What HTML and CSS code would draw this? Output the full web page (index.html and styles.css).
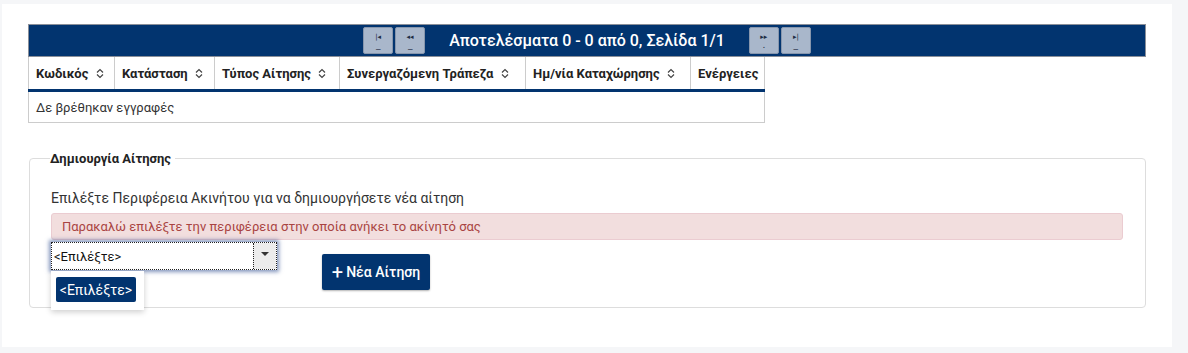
FILE: index.html
```html
<!DOCTYPE html>
<html lang="el">
<head>
    <meta charset="UTF-8">
    <title>Αιτήσεις</title>
    <link rel="stylesheet" href="styles.css">
</head>
<body>
    <div class="page">
        <div class="pager">
            <button class="pg-btn"><span class="pg-ico">|◂</span><span class="pg-bar">_</span></button>
            <button class="pg-btn"><span class="pg-ico">◂◂</span><span class="pg-bar">_</span></button>
            <span class="pager-text">Αποτελέσματα 0 - 0 από 0, Σελίδα 1/1</span>
            <button class="pg-btn"><span class="pg-ico">▸▸</span><span class="pg-bar">.</span></button>
            <button class="pg-btn"><span class="pg-ico">▸|</span><span class="pg-bar">_</span></button>
        </div>
        <table class="grid">
            <colgroup>
                <col style="width: 86px">
                <col style="width: 100px">
                <col style="width: 125px">
                <col style="width: 186px">
                <col style="width: 165px">
                <col style="width: 74px">
            </colgroup>
            <thead>
                <tr>
                    <th>Κωδικός <svg class="sort" viewBox="0 0 8 11"><path d="M1 4.5 L4 1.5 L7 4.5 M1 6.5 L4 9.5 L7 6.5"/></svg></th>
                    <th>Κατάσταση <svg class="sort" viewBox="0 0 8 11"><path d="M1 4.5 L4 1.5 L7 4.5 M1 6.5 L4 9.5 L7 6.5"/></svg></th>
                    <th>Τύπος Αίτησης <svg class="sort" viewBox="0 0 8 11"><path d="M1 4.5 L4 1.5 L7 4.5 M1 6.5 L4 9.5 L7 6.5"/></svg></th>
                    <th>Συνεργαζόμενη Τράπεζα <svg class="sort" viewBox="0 0 8 11"><path d="M1 4.5 L4 1.5 L7 4.5 M1 6.5 L4 9.5 L7 6.5"/></svg></th>
                    <th>Ημ/νία Καταχώρησης <svg class="sort" viewBox="0 0 8 11"><path d="M1 4.5 L4 1.5 L7 4.5 M1 6.5 L4 9.5 L7 6.5"/></svg></th>
                    <th>Ενέργειες</th>
                </tr>
            </thead>
            <tbody>
                <tr><td colspan="6">Δε βρέθηκαν εγγραφές</td></tr>
            </tbody>
        </table>

        <fieldset class="create">
            <legend>Δημιουργία Αίτησης</legend>
            <p class="hint">Επιλέξτε Περιφέρεια Ακινήτου για να δημιουργήσετε νέα αίτηση</p>
            <div class="alert">Παρακαλώ επιλέξτε την περιφέρεια στην οποία ανήκει το ακίνητό σας</div>
            <div class="form-row">
                <div class="combo">
                    <div class="combo-box">
                        <span class="combo-value">&lt;Επιλέξτε&gt;</span>
                        <span class="combo-arrow"></span>
                    </div>
                    <div class="combo-list">
                        <div class="combo-item">&lt;Επιλέξτε&gt;</div>
                    </div>
                </div>
                <button class="btn-new"><span class="plus">+</span> Νέα Αίτηση</button>
            </div>
        </fieldset>
    </div>
</body>
</html>
```

FILE: styles.css
```css
body {
    margin: 0;
    background: #f5f6f8;
    font-family: Roboto, "Open Sans", sans-serif;
    color: #333;
}

.page {
    background: #fff;
    margin: 4px 16px 6px 2px;
    height: 343px;
    padding: 20px 26px 0 26px;
    box-sizing: border-box;
}

/* pager bar */
.pager {
    background: #02346f;
    border: 1px solid #8a8f99;
    height: 33px;
    box-sizing: border-box;
    display: flex;
    justify-content: center;
    align-items: center;
    gap: 2px;
}

.pg-btn {
    width: 30px;
    height: 27px;
    background: #a9b7cb;
    border: 1px solid #8796ad;
    border-radius: 2px;
    padding: 0;
    display: flex;
    flex-direction: column;
    align-items: center;
    justify-content: center;
    color: #1d2c44;
    font-size: 7px;
    line-height: 8px;
    font-family: "DejaVu Sans", sans-serif;
}

.pg-bar {
    font-size: 9px;
    line-height: 6px;
    margin-top: 1px;
}

.pager-text {
    color: #fff;
    font-size: 16px;
    font-weight: 500;
    margin: 0 22px;
}

/* table */
.grid {
    border-collapse: collapse;
    table-layout: fixed;
    width: 736px;
}

.grid th {
    text-align: left;
    font-size: 13px;
    font-weight: bold;
    color: #222;
    height: 32px;
    padding: 0 7px;
    border-left: 1px solid #ccc;
    border-right: 1px solid #ccc;
    border-bottom: 3px solid #02346f;
    white-space: nowrap;
    overflow: hidden;
}

.sort {
    width: 8px;
    height: 11px;
    margin-left: 4px;
    vertical-align: -1px;
    fill: none;
    stroke: #444;
    stroke-width: 1.2;
}

.grid td {
    height: 30px;
    padding: 0 7px;
    font-size: 13px;
    color: #333;
    border: 1px solid #ccc;
    border-top: none;
}

/* create request */
.create {
    margin: 28px 0 0 1px;
    width: 1117px;
    height: 157px;
    box-sizing: border-box;
    border: 1px solid #ddd;
    border-radius: 4px;
    padding: 0 22px 0 21px;
}

.create legend {
    font-size: 13px;
    font-weight: bold;
    color: #222;
    padding: 0 4px 0 0;
    margin-left: -1px;
}

.hint {
    margin: 24px 0 7px;
    font-size: 14px;
    color: #333;
}

.alert {
    background: #f2dede;
    border: 1px solid #ebccd1;
    border-radius: 3px;
    color: #a94442;
    font-size: 13px;
    height: 27px;
    box-sizing: border-box;
    padding: 0 10px;
    display: flex;
    align-items: center;
}

.form-row {
    display: flex;
    align-items: flex-start;
    margin-top: 2px;
}

.combo {
    position: relative;
    width: 226px;
}

.combo-box {
    height: 28px;
    box-sizing: border-box;
    border: 1px dotted #222;
    box-shadow: 0 0 4px 2px rgba(50, 80, 145, 0.6);
    display: flex;
    background: #fff;
}

.combo-value {
    flex: 1;
    font-size: 13px;
    color: #111;
    padding-left: 2px;
    display: flex;
    align-items: center;
}

.combo-arrow {
    width: 22px;
    border-left: 1px dotted #222;
    background: #ececec;
    position: relative;
}

.combo-arrow::after {
    content: "";
    position: absolute;
    left: 7px;
    top: 9px;
    border-left: 4px solid transparent;
    border-right: 4px solid transparent;
    border-top: 4px solid #333;
}

.combo-list {
    position: absolute;
    left: 0;
    top: 29px;
    width: 93px;
    height: 39px;
    background: #fff;
    box-shadow: 0 2px 6px rgba(0, 0, 0, 0.2);
    padding: 6px 0 0 5px;
    box-sizing: border-box;
}

.combo-item {
    background: #02346f;
    color: #fff;
    font-size: 14px;
    width: 80px;
    height: 25px;
    border-radius: 2px;
    display: flex;
    align-items: center;
    justify-content: center;
}

.btn-new {
    margin: 12px 0 0 45px;
    width: 108px;
    height: 36px;
    background: #02346f;
    color: #fff;
    border: none;
    border-radius: 2px;
    box-shadow: 0 1px 2px rgba(0, 0, 0, 0.3);
    font-family: Roboto, sans-serif;
    font-size: 14px;
    font-weight: 500;
    display: flex;
    align-items: center;
    justify-content: center;
    gap: 3px;
}

.plus {
    font-size: 20px;
    font-weight: 400;
    line-height: 1;
}
```
